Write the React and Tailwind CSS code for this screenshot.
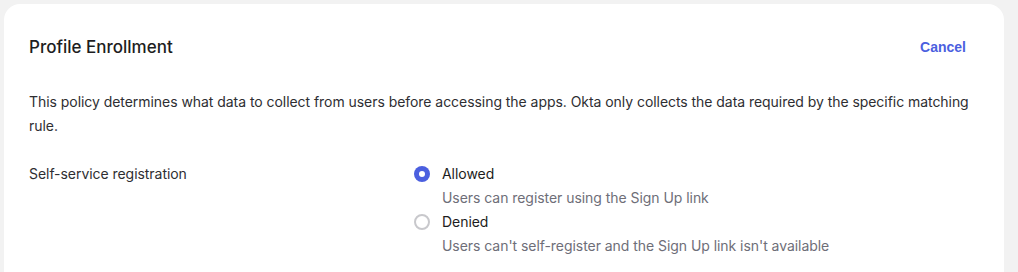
import React from "react";

export default function App() {
  return (
    <div className="w-[1018px] h-[272px] overflow-hidden bg-[#f2f2f2] pl-1 pt-1" style={{ fontFamily: "Inter, 'Noto Sans', sans-serif" }}>
      <div className="w-[1000px] h-[300px] bg-white rounded-2xl pl-[25px] pr-[12px]">
        <div className="h-[86px] flex items-center justify-between">
          <h1 className="text-[17px] font-medium text-[#1d1d21] leading-6">Profile Enrollment</h1>
          <button className="mr-[26px] text-[14px] font-bold text-[#4b5fdf] leading-6" style={{ fontFamily: "'Liberation Sans', Arial, sans-serif" }}>Cancel</button>
        </div>
        <p className="text-[14px] leading-6 text-[#2e2e32] tracking-[-0.05px]">
          This policy determines what data to collect from users before accessing the apps. Okta only collects the data required by the specific matching rule.
        </p>
        <div className="mt-6 flex tracking-[-0.05px]">
          <div className="w-[385px] text-[14px] leading-6 text-[#2e2e32]">Self-service registration</div>
          <div className="flex flex-col">
            <label className="flex items-center gap-3 text-[14px] leading-6 text-[#1d1d21]">
              <span className="w-4 h-4 rounded-full bg-[#4b5fdf] flex items-center justify-center">
                <span className="w-[6px] h-[6px] rounded-full bg-white" />
              </span>
              Allowed
            </label>
            <div className="pl-7 text-[14px] leading-6 text-[#6e6e78]">Users can register using the Sign Up link</div>
            <label className="flex items-center gap-3 text-[14px] leading-6 text-[#1d1d21]">
              <span className="w-4 h-4 rounded-full border-2 border-[#c8c8cc] bg-white" />
              Denied
            </label>
            <div className="pl-7 text-[14px] leading-6 text-[#6e6e78]">Users can't self-register and the Sign Up link isn't available</div>
          </div>
        </div>
      </div>
    </div>
  );
}
